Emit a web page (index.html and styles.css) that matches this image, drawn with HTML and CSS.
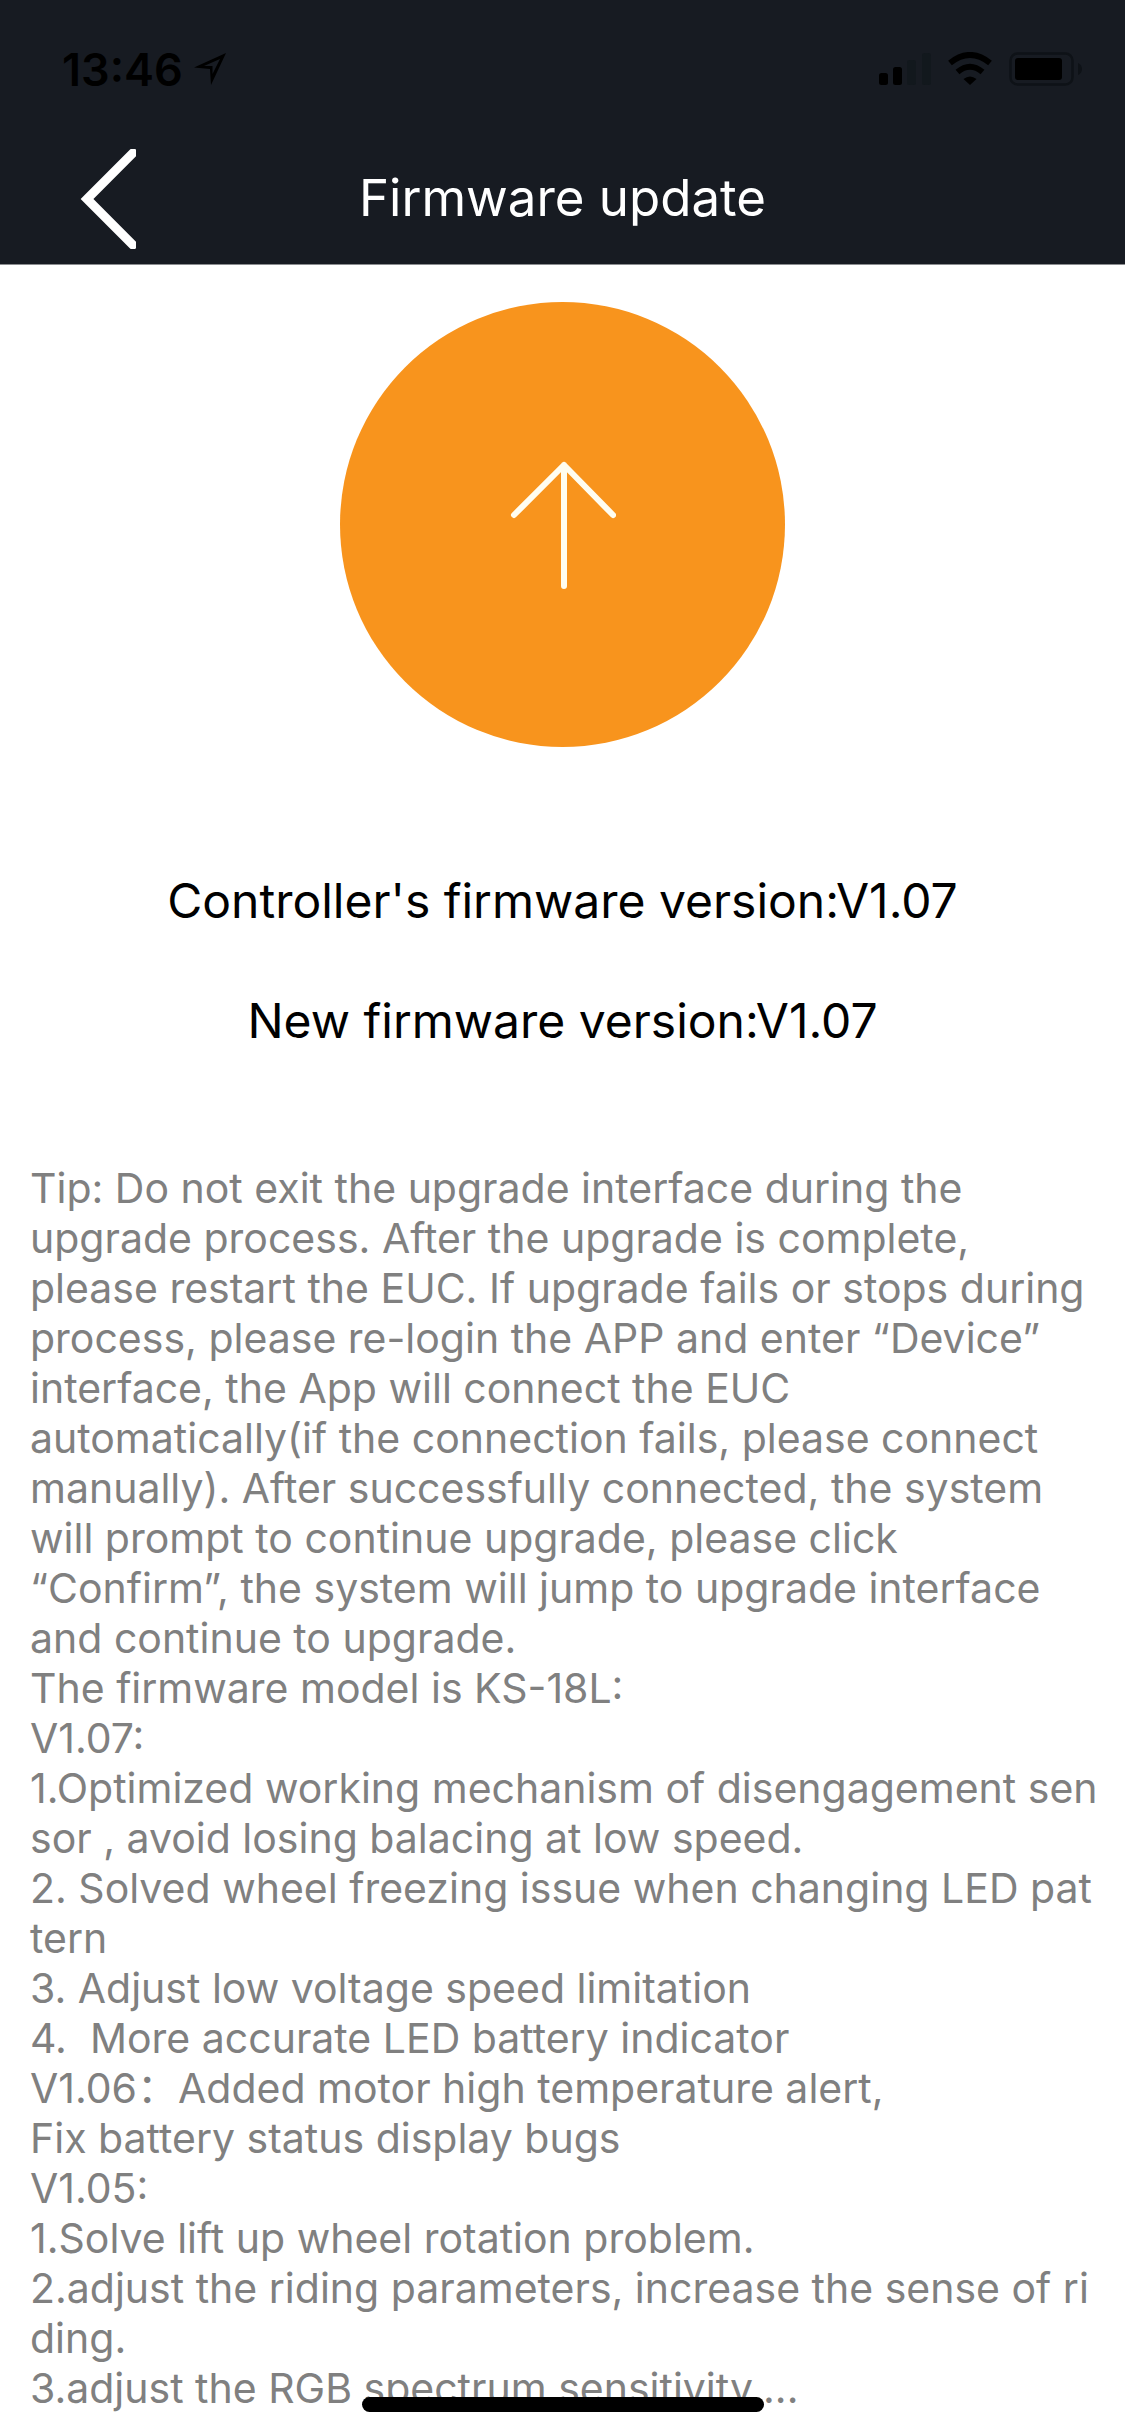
FILE: index.html
```
<!DOCTYPE html>
<html lang="en">
<head>
    <meta charset="UTF-8">
    <meta name="viewport" content="width=device-width, initial-scale=1.0">
    <title>Firmware update</title>
    <link rel="stylesheet" href="styles.css">
</head>
<body>
    <header class="header">
        <!-- status bar -->
        <div class="status">
            <div class="status-left">
                <span class="time">13:46</span>
                <svg width="34" height="34" viewBox="0 0 34 34">
                    <path d="M33 1 L18 33 L17 17 L1 15.500 Z M27 7 L11 14 L19.500 14 L19.500 22 Z" fill="#000" fill-rule="evenodd"/>
                </svg>
            </div>
            <div class="status-right">
                <svg width="52" height="34" viewBox="0 0 52 34">
                    <rect x="0" y="21" width="9" height="12" rx="2.500" fill="#000"/>
                    <rect x="14" y="15" width="9" height="18" rx="2.500" fill="#000"/>
                    <rect x="28" y="8" width="9" height="25" rx="2.500" fill="#12181d"/>
                    <rect x="43" y="1" width="9" height="32" rx="2.500" fill="#12181d"/>
                </svg>
                <svg width="46" height="34" viewBox="0 0 46 34">
                    <path d="M3 11 Q23 -5 43 11" fill="none" stroke="#000" stroke-width="6"/>
                    <path d="M10.500 20 Q23 9.500 35.500 20" fill="none" stroke="#000" stroke-width="6"/>
                    <path d="M16.500 27 Q23 22 29.500 27 L23 33 Z" fill="#000"/>
                </svg>
                <svg width="74" height="34" viewBox="0 0 74 34">
                    <rect x="1.500" y="1.500" width="62" height="31" rx="7" fill="none" stroke="#0e1217" stroke-width="2.500"/>
                    <rect x="6" y="6" width="47" height="22" rx="3" fill="#000"/>
                    <path d="M69 11 Q73 13 73 17 Q73 21 69 23 Z" fill="#0e1217"/>
                </svg>
            </div>
        </div>
        <!-- title bar -->
        <div class="nav">
            <button class="back" type="button" aria-label="Back">
                <svg width="56" height="100" viewBox="0 0 56 100">
                    <path d="M53 4 L7 50 L53 96" fill="none" stroke="#fff" stroke-width="9" stroke-linecap="round"/>
                </svg>
            </button>
            <h1 class="title">Firmware update</h1>
        </div>
    </header>
    <main class="main">
        <button class="upgrade" type="button" aria-label="Upgrade">
            <svg width="106" height="130" viewBox="0 0 106 130">
                <path d="M4 55 L54 5 L103 55 M54 5 V126" fill="none" stroke="#fffdf0" stroke-width="6" stroke-linecap="round" stroke-linejoin="round"/>
            </svg>
        </button>
        <div class="versions">
            <p>Controller's firmware version:V1.07</p>
            <p>New firmware version:V1.07</p>
        </div>
        <p class="tip">Tip: Do not exit the upgrade interface during the
upgrade process. After the upgrade is complete,
please restart the EUC. If upgrade fails or stops during
process, please re-login the APP and enter “Device”
interface, the App will connect the EUC
automatically(if the connection fails, please connect
manually). After successfully connected, the system
will prompt to continue upgrade, please click
“Confirm”, the system will jump to upgrade interface
and continue to upgrade.
The firmware model is KS-18L:
V1.07:
1.Optimized working mechanism of disengagement sen
sor , avoid losing balacing at low speed.
2. Solved wheel freezing issue when changing LED pat
tern
3. Adjust low voltage speed limitation
4.  More accurate LED battery indicator
V1.06：Added motor high temperature alert,
Fix battery status display bugs
V1.05:
1.Solve lift up wheel rotation problem.
2.adjust the riding parameters, increase the sense of ri
ding.
3.adjust the RGB spectrum sensitivity,...</p>
    </main>
    <div class="home-bar"></div>
</body>
</html>
```

FILE: styles.css
```
*{
    margin: 0;
    padding: 0;
    box-sizing: border-box;
}
body{
    min-height: 100vh;
    position: relative;
    background: #fff;
    font-family: Inter, "Noto Sans CJK SC", sans-serif;
}
button{
    border: none;
    background: none;
    cursor: pointer;
}
svg{
    display: block;
}
.header{
    background: #171b22;
    color: #fff;
    border-bottom: 1px solid #8b8d90;
}
.status{
    height: 132px;
    padding: 6px 42px 0 62px;
    display: flex;
    justify-content: space-between;
    align-items: center;
}
.status-left{
    display: flex;
    align-items: center;
    gap: 10px;
    color: #000;
}
.time{
    font-size: 45px;
    font-weight: 600;
}
.status-right{
    display: flex;
    gap: 16px;
}
.nav{
    height: 132px;
    padding-bottom: 2px;
    display: grid;
    grid-template-columns: 160px 1fr 160px;
    align-items: center;
}
.back{
    padding: 4px 0 0 80px;
}
.title{
    font-size: 51px;
    font-weight: 400;
    text-align: center;
}
.main{
    padding: 37px 30px 20px;
}
.upgrade{
    width: 445px;
    height: 445px;
    margin: 0 auto;
    border-radius: 50%;
    background: #f8941d;
    display: flex;
    justify-content: center;
    align-items: center;
}
.versions{
    margin-top: 94px;
    font-size: 48px;
    line-height: 120px;
    text-align: center;
    color: #000;
}
.tip{
    margin-top: 82px;
    font-size: 41px;
    line-height: 50px;
    color: #808080;
    white-space: pre;
}
/* home indicator, lies over the text */
.home-bar{
    width: 402px;
    height: 15px;
    position: absolute;
    left: 50%;
    bottom: 24px;
    transform: translateX(-50%);
    border-radius: 8px;
    background: #000;
}
```
